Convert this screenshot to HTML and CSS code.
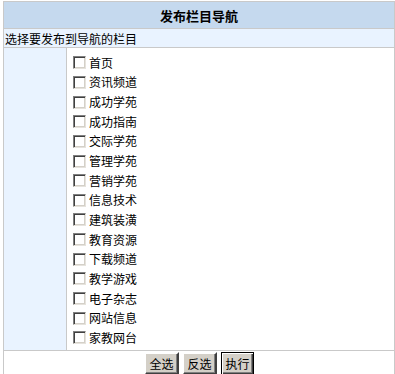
FILE: index.html
```html
<!DOCTYPE html>
<html lang="zh-CN">
<head>
    <meta charset="UTF-8">
    <title>发布栏目导航</title>
    <link rel="stylesheet" href="styles.css">
</head>
<body>
    <table class="panel">
        <!-- 标题 -->
        <tr>
            <td class="head" colspan="2">发布栏目导航</td>
        </tr>
        <tr>
            <td class="tip" colspan="2">选择要发布到导航的栏目</td>
        </tr>
        <!-- 栏目列表 -->
        <tr>
            <td class="side"></td>
            <td class="list">
                <label class="item"><input type="checkbox"> 首页</label>
                <label class="item"><input type="checkbox"> 资讯频道</label>
                <label class="item"><input type="checkbox"> 成功学苑</label>
                <label class="item"><input type="checkbox"> 成功指南</label>
                <label class="item"><input type="checkbox"> 交际学苑</label>
                <label class="item"><input type="checkbox"> 管理学苑</label>
                <label class="item"><input type="checkbox"> 营销学苑</label>
                <label class="item"><input type="checkbox"> 信息技术</label>
                <label class="item"><input type="checkbox"> 建筑装潢</label>
                <label class="item"><input type="checkbox"> 教育资源</label>
                <label class="item"><input type="checkbox"> 下载频道</label>
                <label class="item"><input type="checkbox"> 教学游戏</label>
                <label class="item"><input type="checkbox"> 电子杂志</label>
                <label class="item"><input type="checkbox"> 网站信息</label>
                <label class="item"><input type="checkbox"> 家教网台</label>
            </td>
        </tr>
        <!-- 操作按钮 -->
        <tr>
            <td class="foot" colspan="2">
                <button class="btn">全选</button>
                <button class="btn">反选</button>
                <button class="btn btn-default">执行</button>
            </td>
        </tr>
    </table>
</body>
</html>
```

FILE: styles.css
```css
*{
    box-sizing: border-box;
}

body{
    margin: 0;
    padding: 1px 0 0 3px;
    background: #fff;
    font-family: "Noto Sans CJK SC", "Liberation Sans", sans-serif;
    font-size: 12px;
    color: #000;
}

/* 外框表格 */
.panel{
    width: 392px;
    border-collapse: collapse;
}

.panel td{
    border: 1px solid #c9c9c9;
    padding: 0;
}

.head{
    height: 27px;
    background: #c5d9ee;
    text-align: center;
    font-size: 13px;
    font-weight: bold;
}

.tip{
    height: 19px;
    background: #e9f3ff;
    padding-left: 1px !important;
    line-height: 17px;
}

.side{
    width: 63px;
    background: #e9f3ff;
}

.list{
    height: 303px;
    vertical-align: top;
    padding: 5px 0 0 6px !important;
}

.item{
    display: flex;
    align-items: center;
    height: 19.65px;
    line-height: 1;
}

/* 复选框 - 经典样式 */
.item input{
    appearance: none;
    -webkit-appearance: none;
    width: 13px;
    height: 13px;
    margin: 0 3px 0 0;
    background: #fff;
    border: 1px solid;
    border-color: #808080 #e6e3dd #e6e3dd #808080;
    box-shadow: inset 1px 1px 0 #404040, inset -1px -1px 0 #d4d0c8;
}

.foot{
    height: 30px;
    text-align: center;
    vertical-align: top;
    padding-top: 1px !important;
    font-size: 0;
}

.btn{
    font-family: "Noto Sans CJK SC", sans-serif;
    font-size: 12px;
    width: 35px;
    height: 23px;
    padding: 0;
    margin: 0 1.5px;
    background: #d4d0c8;
    color: #000;
    border: 2px solid;
    border-color: #fff #404040 #404040 #fff;
    box-shadow: inset -1px -1px 0 #808080;
}

.btn-default{
    width: 33px;
    margin-left: 2.5px;
    border: 1px solid #000;
    box-shadow: inset 1px 1px 0 #fff, inset -1px -1px 0 #404040, inset -2px -2px 0 #808080;
}
```
